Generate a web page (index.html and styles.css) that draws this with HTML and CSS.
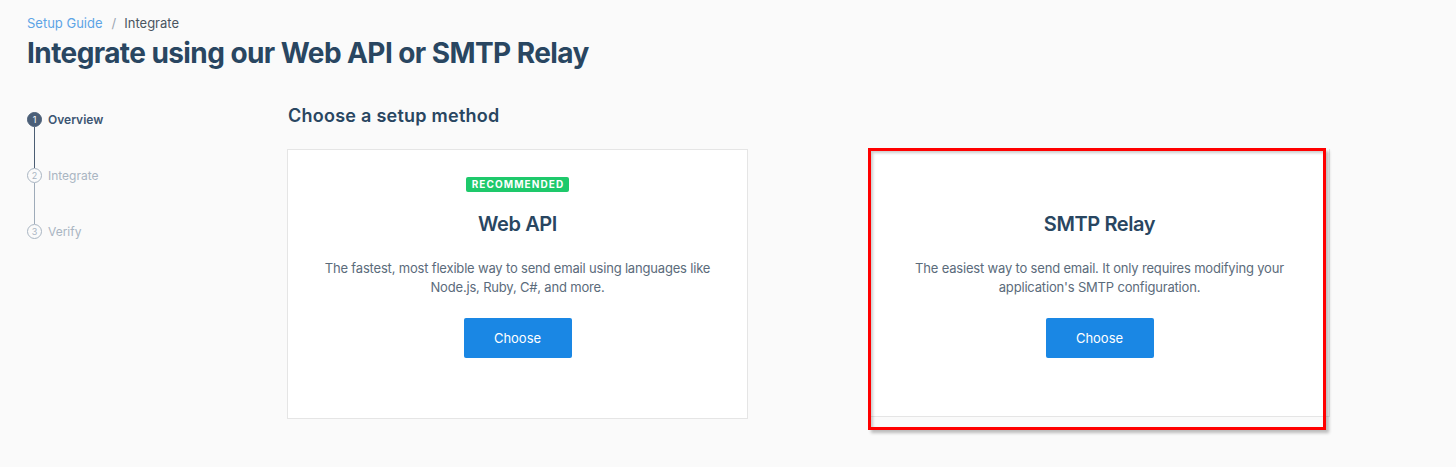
FILE: index.html
```html
<!DOCTYPE html>
<html>
<head>
<meta charset="utf-8">
<link rel="stylesheet" href="styles.css">
</head>
<body>
<div class="page">
  <nav class="crumbs"><a class="crumb-link">Setup Guide</a><span class="sep">/</span><span class="crumb-cur">Integrate</span></nav>
  <h1 class="title">Integrate using our Web API or SMTP Relay</h1>
  <div class="layout">
    <ol class="steps">
      <li class="step active"><span class="dot">1</span><span class="label">Overview</span></li>
      <li class="step"><span class="dot">2</span><span class="label">Integrate</span></li>
      <li class="step last"><span class="dot">3</span><span class="label">Verify</span></li>
    </ol>
    <main class="main">
      <h2 class="subtitle">Choose a setup method</h2>
      <div class="cards">
        <section class="card">
          <span class="badge">RECOMMENDED</span>
          <h3 class="card-title">Web API</h3>
          <p class="card-text">The fastest, most flexible way to send email using languages like Node.js, Ruby, C#, and more.</p>
          <button class="btn">Choose</button>
        </section>
        <div class="highlight">
          <section class="card card-hl">
            <span class="badge hidden">RECOMMENDED</span>
            <h3 class="card-title">SMTP Relay</h3>
            <p class="card-text">The easiest way to send email. It only requires modifying your application's SMTP configuration.</p>
            <button class="btn">Choose</button>
          </section>
        </div>
      </div>
    </main>
  </div>
</div>
</body>
</html>
```
FILE: styles.css
```css
*, *::before, *::after { box-sizing: border-box; }
html, body { margin: 0; padding: 0; }
body {
  background: #fafafa;
  font-family: Inter, "Liberation Sans", sans-serif;
  color: #294661;
  width: 1456px;
  height: 467px;
  overflow: hidden;
}
.page { padding: 15px 0 0 27px; }
.crumbs { font-size: 13px; line-height: 17px; display: flex; align-items: center; }
.crumb-link { color: #5da4e6; }
.sep { color: #9aa6b2; margin: 0 8px 0 9px; }
.crumb-cur { color: #4a5561; }
.title {
  margin: 3px 0 0;
  font-size: 28px;
  line-height: 36px;
  font-weight: 700;
  letter-spacing: -0.58px;
  color: #294661;
}
.layout { display: flex; margin-top: 33px; }
.steps { list-style: none; margin: 8px 0 0; padding: 0; width: 260px; flex: none; }
.step {
  position: relative;
  display: flex;
  align-items: center;
  height: 15px;
  margin-bottom: 41px;
}
.step::after {
  content: "";
  position: absolute;
  left: 7px;
  top: 15px;
  width: 1px;
  height: 41px;
  background: #9eabb9;
}
.step.active::after { background: #4b5d73; }
.step.last::after { display: none; }
.dot {
  width: 15px; height: 15px;
  border-radius: 50%;
  border: 1px solid #a9b5c2;
  color: #a9b5c2;
  font-size: 9px;
  display: flex; align-items: center; justify-content: center;
  flex: none;
}
.active .dot { background: #4b5f78; border-color: #4b5f78; color: #fff; }
.label { margin-left: 6px; font-size: 12px; color: #a9b5c2; }
.active .label { color: #3c5572; font-weight: 600; }
.main { flex: none; }
.subtitle {
  margin: 0;
  font-size: 18px;
  line-height: 24px;
  font-weight: 600;
  letter-spacing: 0.25px;
  color: #294661;
  padding-left: 1px;
}
.cards { display: flex; gap: 121px; margin-top: 21px; }
.card {
  width: 461px;
  height: 270px;
  background: #fff;
  border: 1px solid #e5e5e5;
  display: flex;
  flex-direction: column;
  align-items: center;
  padding-top: 27px;
}
.badge {
  background: #1ec96b;
  color: #fff;
  font-size: 10px;
  font-weight: 700;
  letter-spacing: 1.1px;
  line-height: 15px;
  padding: 0 5px 0 6px;
  border-radius: 2px;
}
.badge.hidden { visibility: hidden; }
.card-title {
  margin: 19px 0 0;
  font-size: 20px;
  font-weight: 600;
  line-height: 26px;
  letter-spacing: -0.4px;
  color: #294661;
}
.card-text {
  margin: 22px 0 0;
  width: 420px;
  text-align: center;
  font-size: 13px;
  line-height: 19px;
  letter-spacing: -0.18px;
  color: #5b6b7b;
}
.btn {
  margin-top: 21px;
  width: 108px;
  height: 40px;
  border: none;
  border-radius: 2px;
  background: #1a87e4;
  color: #fff;
  font-family: inherit;
  font-size: 13px;
}
.highlight {
  position: relative;
  height: 283px;
  margin-top: -1px;
}
.highlight::before {
  content: "";
  position: absolute;
  left: -1px; top: 0;
  width: 458px; height: 282px;
  border: 3px solid #ff0000;
  box-shadow: 3px 3px 3px rgba(0,0,0,0.25), inset 2px 2px 3px rgba(0,0,0,0.2);
  pointer-events: none;
  z-index: 2;
}
.card-hl {
  height: 268px;
  margin-top: 1px;
  padding-top: 28px;
  border-top: none;
}
```
